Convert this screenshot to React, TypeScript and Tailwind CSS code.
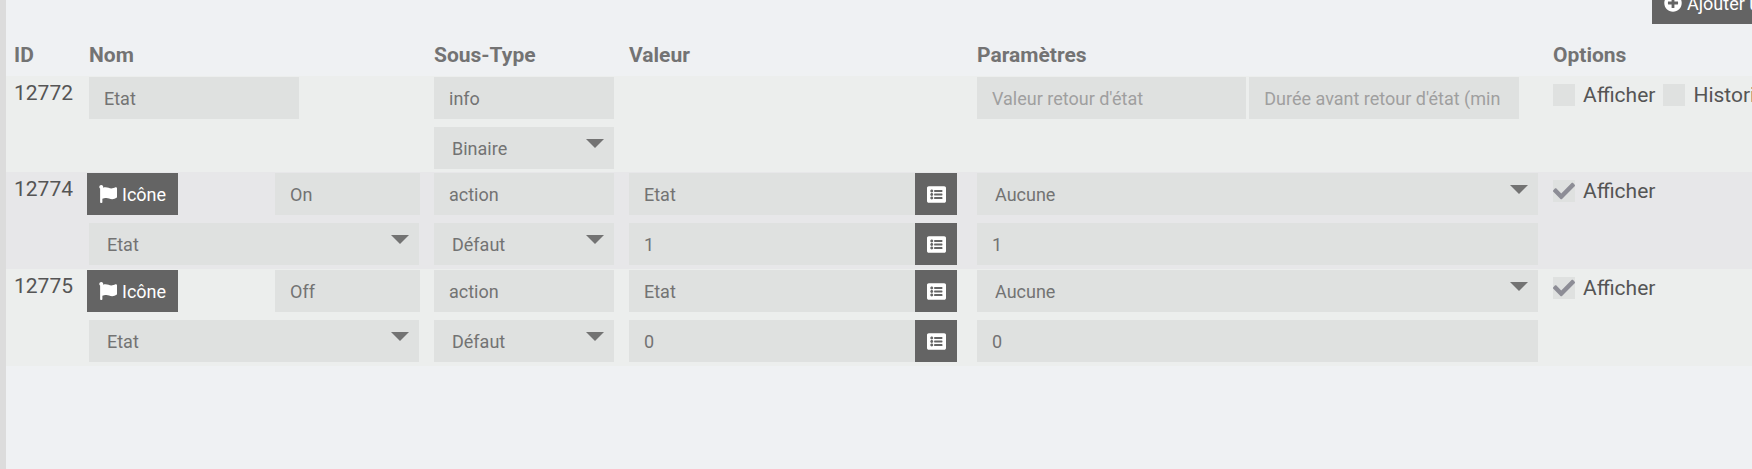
import type { ReactNode } from "react";
import { FaCheck, FaFlag, FaListAlt, FaPlusCircle } from "react-icons/fa";

const field = "h-[42px] bg-[#dfe1e0] text-[18px] text-[#737373] rounded-none outline-none";

function TextField({ label, value, placeholder, className }: {
  label: string;
  value?: string;
  placeholder?: string;
  className: string;
}) {
  return (
    <input
      type="text"
      aria-label={label}
      defaultValue={value}
      placeholder={placeholder}
      className={`${field} block min-w-0 px-[15px] placeholder:text-[#9f9f9f] ${className}`}
    />
  );
}

function SelectField({ label, options, className }: { label: string; options: string[]; className: string }) {
  return (
    <div className={`relative ${className}`}>
      <select aria-label={label} className={`${field} block w-full appearance-none pl-[18px] pr-10`}>
        {options.map((o) => (
          <option key={o}>{o}</option>
        ))}
      </select>
      <svg
        viewBox="0 0 18 9"
        className="pointer-events-none absolute right-[10px] top-3 h-[9px] w-[18px] fill-[#737373]"
        aria-hidden="true"
      >
        <path d="M0 0h18L9 9z" />
      </svg>
    </div>
  );
}

function Check({ label, checked }: { label: string; checked?: boolean }) {
  return (
    <label className="flex shrink-0 items-center gap-2">
      <span className="grid h-[22px] w-[22px] place-items-center">
        <input
          type="checkbox"
          defaultChecked={checked}
          className="peer col-start-1 row-start-1 h-[22px] w-[22px] appearance-none bg-[#dfe1e0]"
        />
        <FaCheck className="pointer-events-none invisible col-start-1 row-start-1 h-[22px] w-[22px] text-[#8d8d96] peer-checked:visible" />
      </span>
      {label}
    </label>
  );
}

function PickerRow({ label, value }: { label: string; value: string }) {
  return (
    <div className="flex">
      <TextField label={label} value={value} className="flex-1" />
      <button
        type="button"
        aria-label="Choisir une commande"
        className="grid h-[42px] w-[42px] shrink-0 place-items-center bg-[#646464] text-white"
      >
        <FaListAlt className="h-[19px] w-[19px]" />
      </button>
    </div>
  );
}

function Cell({ children }: { children?: ReactNode }) {
  return (
    <td className="pb-[3px] pl-2 pr-[7px] pt-px align-top">
      <div className="flex flex-col gap-2">{children}</div>
    </td>
  );
}

function IdCell({ id }: { id: string }) {
  return <td className="whitespace-nowrap pl-2 pt-[2px] align-top leading-[30px]">{id}</td>;
}

function OptionsCell({ children }: { children: ReactNode }) {
  return (
    <td className="px-2 pt-1 align-top">
      <div className="flex gap-2 whitespace-nowrap leading-[30px]">{children}</div>
    </td>
  );
}

function ActionRow({ id, name, value, className }: { id: string; name: string; value: string; className: string }) {
  return (
    <tr className={className}>
      <IdCell id={id} />
      <Cell>
        <div className="-ml-[2px] -mr-px flex justify-between">
          <button type="button" className="flex h-[42px] items-center gap-[5px] bg-[#646464] px-3 text-[18px] text-white">
            <FaFlag className="h-[18px] w-[18px]" />
            Icône
          </button>
          <TextField label="Nom" value={name} className="w-[145px]" />
        </div>
        <SelectField label="Commande liée" options={["Etat"]} className="w-full" />
      </Cell>
      <Cell>
        <TextField label="Type" value="action" className="w-full" />
        <SelectField label="Sous-type" options={["Défaut"]} className="w-full" />
      </Cell>
      <td className="pb-1 pl-2 pr-3 pt-px align-top">
        <div className="flex flex-col gap-2">
          <PickerRow label="Commande" value="Etat" />
          <PickerRow label="Valeur" value={value} />
        </div>
      </td>
      <Cell>
        <SelectField label="Paramètre" options={["Aucune"]} className="w-full" />
        <TextField label="Valeur du paramètre" value={value} className="w-full" />
      </Cell>
      <OptionsCell>
        <Check label="Afficher" checked />
      </OptionsCell>
    </tr>
  );
}

export default function App() {
  return (
    <main className="min-h-screen overflow-hidden border-l-[6px] border-[#dcdcdc] bg-[#eff1f3] font-['Roboto',sans-serif] text-[21px] text-[#555555]">
      <div className="-mt-[18px] flex justify-end">
        <div className="w-[100px]">
          <button
            type="button"
            className="flex h-[42px] w-max items-center gap-[5px] bg-[#646464] px-3 text-[18px] text-white"
          >
            <FaPlusCircle className="h-[18px] w-[18px]" />
            Ajouter une commande
          </button>
        </div>
      </div>
      <table className="w-full min-w-[1400px] table-fixed border-collapse">
        <colgroup>
          <col className="w-[75px]" />
          <col className="w-[345px]" />
          <col className="w-[195px]" />
          <col className="w-[348px]" />
          <col />
          <col className="w-[207px]" />
        </colgroup>
        <thead>
          <tr className="text-left leading-[30px] text-[#737373]">
            {["ID", "Nom", "Sous-Type", "Valeur", "Paramètres", "Options"].map((h) => (
              <th key={h} scope="col" className="px-2 pb-[6px] pt-4 font-bold">
                {h}
              </th>
            ))}
          </tr>
        </thead>
        <tbody>
          <tr className="bg-[#eceeed]">
            <IdCell id="12772" />
            <Cell>
              <TextField label="Nom" value="Etat" className="w-[210px]" />
            </Cell>
            <Cell>
              <TextField label="Type" value="info" className="w-full" />
              <SelectField label="Sous-type" options={["Binaire"]} className="w-full" />
            </Cell>
            <Cell />
            <Cell>
              <div className="flex gap-[3px]">
                <TextField label="Valeur retour d'état" placeholder="Valeur retour d'état" className="w-[48%]" />
                <TextField
                  label="Durée avant retour d'état"
                  placeholder="Durée avant retour d'état (min"
                  className="w-[48%]"
                />
              </div>
            </Cell>
            <OptionsCell>
              <Check label="Afficher" />
              <Check label="Historiser" />
            </OptionsCell>
          </tr>
          <ActionRow id="12774" name="On" value="1" className="bg-[#e7e7e9]" />
          <ActionRow id="12775" name="Off" value="0" className="bg-[#eceeed]" />
        </tbody>
      </table>
    </main>
  );
}
